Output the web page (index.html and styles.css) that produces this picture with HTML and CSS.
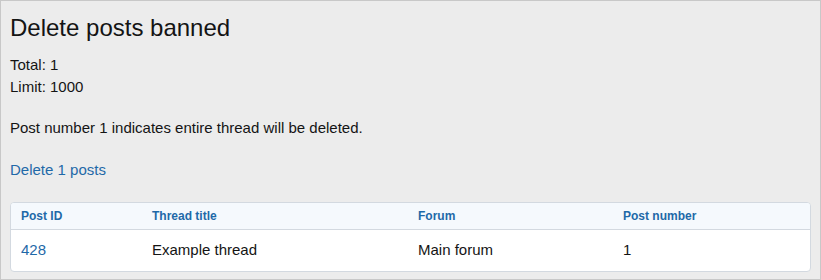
FILE: index.html
```html
<!DOCTYPE html>
<html lang="en">
<head>
    <meta charset="UTF-8">
    <title>Delete posts banned</title>
    <link rel="stylesheet" href="styles.css">
</head>
<body>
    <div class="page">
        <h1 class="page-title">Delete posts banned</h1>

        <div class="stats">
            <div>Total: 1</div>
            <div>Limit: 1000</div>
        </div>

        <p class="note">Post number 1 indicates entire thread will be deleted.</p>

        <p class="action"><a href="#">Delete 1 posts</a></p>

        <!-- Posts table -->
        <div class="data-list">
            <table>
                <colgroup>
                    <col class="col-id">
                    <col class="col-title">
                    <col class="col-forum">
                    <col>
                </colgroup>
                <thead>
                    <tr>
                        <th>Post ID</th>
                        <th>Thread title</th>
                        <th>Forum</th>
                        <th>Post number</th>
                    </tr>
                </thead>
                <tbody>
                    <tr>
                        <td><a href="#">428</a></td>
                        <td>Example thread</td>
                        <td>Main forum</td>
                        <td>1</td>
                    </tr>
                </tbody>
            </table>
        </div>
    </div>
</body>
</html>
```

FILE: styles.css
```css
/* General Styles */
html, body {
    margin: 0;
    height: 100%;
}

body {
    font-family: "Liberation Sans", Arial, sans-serif;
    font-size: 15px;
    line-height: 22px;
    color: #141414;
    background: #fff;
}

a {
    color: #1f69a8;
    text-decoration: none;
}

.page {
    box-sizing: border-box;
    height: 280px;
    background: #ececec;
    border: 1px solid #c8c8c8;
    padding: 13px 9px 0;
}

.page-title {
    margin: 0 0 12px;
    font-size: 24px;
    font-weight: 400;
    line-height: 28px;
}

.stats {
    margin: 0;
}

.note {
    margin: 19px 0 0;
}

.action {
    margin: 20px 0 0;
}

/* Data list */
.data-list {
    margin-top: 21px;
    background: #fff;
    border: 1px solid #d3d9e0;
    border-radius: 4px;
    overflow: hidden;
}

.data-list table {
    width: 100%;
    border-collapse: collapse;
    table-layout: fixed;
}

.col-id {
    width: 131px;
}

.col-title {
    width: 266px;
}

.col-forum {
    width: 205px;
}

.data-list th {
    text-align: left;
    font-size: 12px;
    font-weight: 700;
    line-height: 16px;
    color: #1f69a8;
    background: #f5f9fd;
    padding: 5px 10px;
    border-bottom: 1px solid #d3d9e0;
}

.data-list td {
    padding: 10px 10px 11px;
    line-height: 20px;
}
```
